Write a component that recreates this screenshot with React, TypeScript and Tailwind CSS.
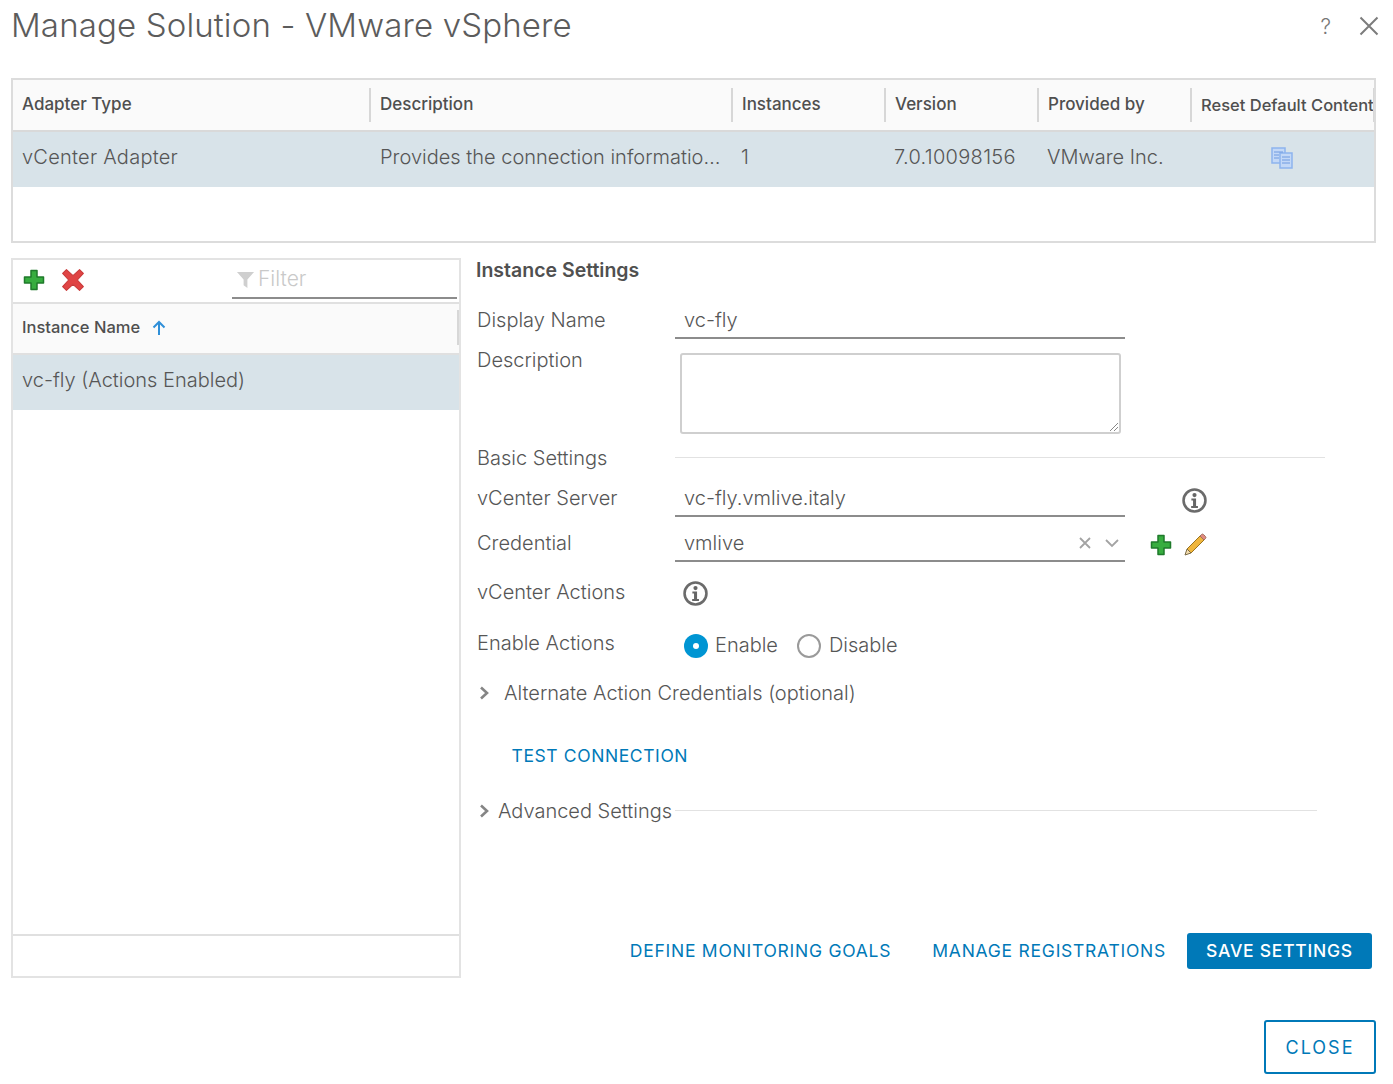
import React from "react";

const Plus = ({ className = "" }: { className?: string }) => (
  <svg viewBox="0 0 22 22" className={"w-[22px] h-[22px] " + className}>
    <path d="M8 1.500h6v6.500h6.500v6H14v6.500H8V14H1.500V8H8z" fill="#37ad3f" stroke="#1f7a2b" strokeWidth="1.500" strokeLinejoin="round" />
  </svg>
);
const Cross = () => (
  <svg viewBox="0 0 22 22" className="w-[24px] h-[24px]">
    <path d="M1.500 5L5 1.500l6 5.500 6-5.500L20.500 5 15 11l5.500 6-3.500 3.500-6-5.500-6 5.500L1.500 17 7 11z" fill="#e04545" stroke="#c93a3a" strokeWidth="1" strokeLinejoin="round" />
  </svg>
);
const Info = () => (
  <svg viewBox="0 0 24 24" className="w-[25px] h-[25px]">
    <circle cx="12" cy="12" r="10.500" fill="#fff" stroke="#6b6b6b" strokeWidth="2.500" />
    <circle cx="12" cy="6.800" r="2" fill="#666" />
    <path d="M9 10h4.500v7.300h1.800v1.900H8.800v-1.900h1.800v-5.400H9z" fill="#666" />
  </svg>
);
const Pencil = () => (
  <svg viewBox="0 0 24 24" className="w-[24px] h-[24px]">
    <path d="M17 3l4 4L8 20l-4-4z" fill="#f0b63c" stroke="#9a7420" strokeWidth="1" />
    <path d="M17 3l1.500-1.500a1.500 1.500 0 0 1 2 0l2 2a1.500 1.500 0 0 1 0 2L21 7z" fill="#e08a80" stroke="#a0705f" strokeWidth="1" />
    <path d="M4 16l4 4-6 2z" fill="#f3dcae" stroke="#7a6a45" strokeWidth="1" />
  </svg>
);
const Chevron = () => (
  <svg viewBox="0 0 10 14" className="w-[10px] h-[14px]">
    <path d="M2 1.500L8 7l-6 5.500" fill="none" stroke="#858585" strokeWidth="2.600" />
  </svg>
);

const Row = ({ label, className = "", children }: { label: string; className?: string; children?: React.ReactNode }) => (
  <div className={"flex items-center pl-px " + className}>
    <div className="w-[198px] shrink-0 pb-[2px]">{label}</div>
    {children}
  </div>
);

const Th = ({ w, children, sep = true }: { w: string; children: React.ReactNode; sep?: boolean }) => (
  <div className={"relative flex h-full items-center pl-[9px] whitespace-nowrap overflow-hidden shrink-0 " + w}>
    {children}
    {sep && <span className="absolute right-0 top-[8px] bottom-[8px] w-[2px] bg-[#d7d7d7]" />}
  </div>
);
const Td = ({ w, children }: { w: string; children: React.ReactNode }) => (
  <div className={"flex h-full items-center pl-[9px] pb-[5px] whitespace-nowrap shrink-0 " + w}>{children}</div>
);

export default function App() {
  return (
    <div className="w-[1393px] h-[1084px] overflow-hidden bg-white pl-[11px] text-[#565656] text-[20px] font-light [font-family:Inter,'Liberation_Sans',sans-serif]">
      <div className="flex h-[78px] w-[1368px] items-start pt-[3px]">
        <h1 className="flex-1 text-[33px] leading-[44px] font-light tracking-[0.15px] text-[#5c5c5c]">Manage Solution - VMware vSphere</h1>
        <span className="mt-[10px] text-[21px] leading-[28px] text-[#777]">?</span>
        <svg viewBox="0 0 20 20" className="ml-[28px] mt-[13px] w-[20px] h-[20px]">
          <path d="M1.500 1.500l17 17M18.500 1.500l-17 17" stroke="#7c7c7c" strokeWidth="2" fill="none" />
        </svg>
      </div>

      <div className="h-[165px] w-[1365px] border-2 border-[#dcdcdc] overflow-hidden">
        <div className="flex h-[52px] border-b-2 border-[#d9d9d9] bg-[#fafafa] text-[17px] font-medium text-[#4f4f4f]">
          <Th w="w-[358px]">Adapter Type</Th>
          <Th w="w-[362px]">Description</Th>
          <Th w="w-[153px]">Instances</Th>
          <Th w="w-[153px]">Version</Th>
          <Th w="w-[153px]">Provided by</Th>
          <Th w="w-[183px]"><span className="text-[16.500px]">Reset Default Content</span></Th>
        </div>
        <div className="flex h-[55px] bg-[#d8e3e9]">
          <Td w="w-[358px]"><span className="tracking-[0.25px]">vCenter Adapter</span></Td>
          <Td w="w-[362px]"><span>Provides the connection informatio…</span></Td>
          <Td w="w-[153px]"><span className="ml-[-1px]">1</span></Td>
          <Td w="w-[153px]"><span className="ml-[-1px] tracking-[0.3px]">7.0.10098156</span></Td>
          <Td w="w-[153px]"><span className="ml-[-1px]">VMware Inc.</span></Td>
          <Td w="w-[183px]">
            <svg viewBox="0 0 24 24" className="ml-[69px] mt-[1px] w-[24px] h-[24px]">
              <g fill="#c3d8f7" stroke="#8db4ee" strokeWidth="1.500">
                <rect x="2" y="2" width="13" height="15" />
                <rect x="10" y="7" width="12" height="15" />
              </g>
              <path d="M4 6h9M4 9h5M4 12h5M12 11h8M12 14h8M12 17h8" stroke="#6e9ae0" strokeWidth="1" />
            </svg>
          </Td>
        </div>
      </div>

      <div className="mt-[15px] flex h-[720px]">
        <div className="flex h-full w-[450px] shrink-0 flex-col border-2 border-[#e3e3e3]">
          <div className="flex h-[42px] shrink-0 items-center pl-[10px] pr-[2px] pb-[2px]">
            <Plus />
            <span className="ml-[16px]"><Cross /></span>
            <div className="ml-[147px] flex h-[38px] w-[225px] mt-[-1px] items-center border-b-2 border-[#8c8c8c] pl-[4px] text-[21px] text-[#c9c9c9]">
              <svg viewBox="0 0 20 20" className="w-[19px] h-[19px] mt-[2px]">
                <path d="M1 2h18l-7 8v9l-4-3v-6z" fill="#cfcfcf" />
              </svg>
              <span className="ml-[3px]">Filter</span>
            </div>
          </div>
          <div className="relative flex h-[53px] shrink-0 items-center border-y-2 border-[#e0e0e0] bg-[#fafafa] pl-[9px] pb-[2px] text-[16.500px] font-medium text-[#4f4f4f]">
            Instance Name
            <svg viewBox="0 0 14 16" className="ml-[12px] w-[14px] h-[16px]">
              <path d="M7 15V2M1.500 7.500L7 2l5.500 5.500" fill="none" stroke="#2f8fd8" strokeWidth="2" />
            </svg>
            <span className="absolute right-0 top-[6px] bottom-[8px] w-[2px] bg-[#d7d7d7]" />
          </div>
          <div className="flex h-[55px] shrink-0 items-center bg-[#d8e3e9] pl-[9px] pb-[5px]">vc-fly (Actions Enabled)</div>
          <div className="flex-1" />
          <div className="h-[42px] shrink-0 border-t-2 border-[#e0e0e0]" />
        </div>

        <div className="ml-[15px] flex h-full w-[896px] shrink-0 flex-col">
          <div className="h-[24px] text-[19.500px] leading-[24px] font-semibold text-[#505050]">Instance Settings</div>
          <Row label="Display Name" className="mt-[20px] h-[37px]">
            <div className="flex h-full w-[450px] items-center border-b-2 border-[#8c8c8c] pl-[9px]">vc-fly</div>
          </Row>
          <div className="flex h-[95px] pl-px">
            <div className="mt-[9px] h-[24px] w-[198px] leading-[24px]">Description</div>
            <div className="relative ml-[5px] mt-[14px] h-[81px] w-[441px] rounded-[3px] border-2 border-[#cfcfcf]">
              <svg viewBox="0 0 10 10" className="absolute bottom-0 right-0 w-[10px] h-[10px]">
                <path d="M1 9l8-8M5 9l4-4" stroke="#888" strokeWidth="1" />
              </svg>
            </div>
          </div>
          <div className="mt-[12px] flex h-[24px] items-center pl-px">
            <div className="w-[198px] shrink-0">Basic Settings</div>
            <div className="mt-[-2px] h-px w-[650px] bg-[#e2e2e2]" />
          </div>
          <Row label="vCenter Server" className="mt-[10px] h-[37px]">
            <div className="flex h-full w-[450px] items-center border-b-2 border-[#8c8c8c] pl-[9px]">vc-fly.vmlive.italy</div>
            <span className="ml-[57px] mt-[4px]"><Info /></span>
          </Row>
          <Row label="Credential" className="mt-[8px] h-[37px]">
            <div className="flex h-full w-[450px] items-center border-b-2 border-[#8c8c8c] pl-[9px]">
              <span className="flex-1">vmlive</span>
              <svg viewBox="0 0 14 14" className="w-[14px] h-[14px]">
                <path d="M2 2l10 10M12 2L2 12" stroke="#a3a3a3" strokeWidth="1.800" />
              </svg>
              <svg viewBox="0 0 14 10" className="ml-[13px] mr-[6px] w-[14px] h-[10px]">
                <path d="M1 2l6 6 6-6" fill="none" stroke="#a3a3a3" strokeWidth="1.800" />
              </svg>
            </div>
            <span className="ml-[25px] mt-[2px]"><Plus /></span>
            <span className="ml-[11px] mt-[2px]"><Pencil /></span>
          </Row>
          <Row label="vCenter Actions" className="mt-[18px] h-[26px]">
            <span className="ml-[8px]"><Info /></span>
          </Row>
          <div className="mt-[26px] flex h-[26px] items-center pl-px">
            <div className="mt-[-5px] w-[198px]">Enable Actions</div>
            <span className="ml-[9px] mt-[2px] flex h-[24px] w-[24px] items-center justify-center rounded-full bg-[#0095d3]">
              <span className="h-[6px] w-[6px] rounded-full bg-white" />
            </span>
            <span className="ml-[7px]">Enable</span>
            <span className="ml-[19px] mt-[2px] h-[24px] w-[24px] rounded-full border-2 border-[#9a9a9a]" />
            <span className="ml-[8px]">Disable</span>
          </div>
          <div className="mt-[23px] flex h-[24px] items-center pl-[3px]">
            <Chevron />
            <span className="ml-[15px]">Alternate Action Credentials (optional)</span>
          </div>
          <div className="mt-[39px] h-[24px] pl-[35.500px] text-[17.500px] leading-[24px] font-normal tracking-[0.6px] text-[#0079b8]">TEST CONNECTION</div>
          <div className="mt-[31px] flex h-[24px] items-center pl-[3px]">
            <Chevron />
            <span className="ml-[9px]">Advanced Settings</span>
            <div className="ml-[3px] mt-[-2px] h-px w-[642px] bg-[#e2e2e2]" />
          </div>
          <div className="mt-[110px] flex h-[36px] items-center justify-end text-[17.500px] font-normal tracking-[0.75px] text-[#0079b8]">
            <span>DEFINE MONITORING GOALS</span>
            <span className="ml-[41px]">MANAGE REGISTRATIONS</span>
            <span className="ml-[21px] flex h-[36px] w-[185px] items-center justify-center rounded-[3px] bg-[#0079b8] font-medium text-white">SAVE SETTINGS</span>
          </div>
        </div>
      </div>

      <div className="mt-[42px] flex w-[1365px] justify-end">
        <span className="flex h-[54px] w-[112px] items-center justify-center rounded-[3px] border-2 border-[#0079b8] text-[18px] font-normal tracking-[2px] text-[#0079b8]">CLOSE</span>
      </div>
    </div>
  );
}
